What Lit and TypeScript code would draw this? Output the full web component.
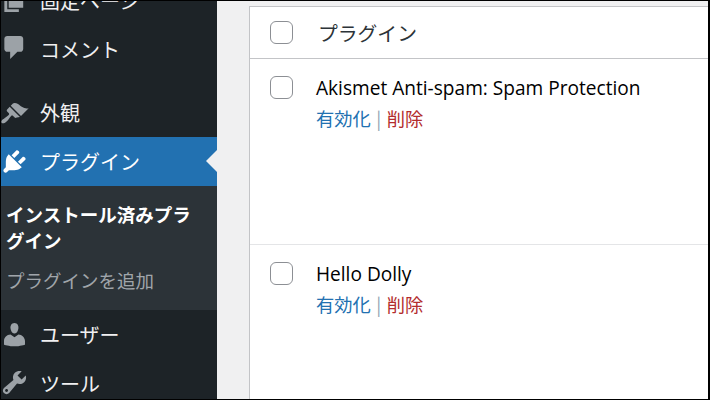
import { LitElement, html, css, svg } from "lit";
import { customElement } from "lit/decorators.js";

const ICONS: Record<string, string> = {
  page: "M6 15V2h10v13H6zm-1 1h8v2H3V5h2v11z",
  comments: "M5 2h9q.82 0 1.41.59T16 4v7q0 .82-.59 1.41T14 13h-2l-5 5v-5H5q-.82 0-1.41-.59T3 11V4q0-.82.59-1.41T5 2z",
  appearance: "M14.48 11.06L7.41 3.99l1.5-1.5c.5-.56 2.3-.47 3.51.32 1.21.8 1.43 1.28 2.91 2.1 1.18.64 2.45 1.26 4.45.85zm-.71.71L6.7 4.7 4.93 6.47c-.39.39-.39 1.02 0 1.41l1.06 1.06c.39.39.39 1.03 0 1.42-.6.6-1.43 1.11-2.21 1.69-.35.26-.7.53-1.01.84C1.43 13.23.4 14.98 1.2 15.8c.82.81 2.57-.22 3.91-1.56.31-.31.58-.66.85-1.02.57-.78 1.08-1.61 1.69-2.21.39-.39 1.02-.39 1.41 0l1.06 1.06c.39.39 1.02.39 1.41 0z",
  plugins: "M13.11 4.36L9.87 7.6 8 5.73l3.24-3.24c.35-.34 1.05-.2 1.56.32.52.51.66 1.21.31 1.55zm-8 1.77l.91-1.12 9.01 9.01-1.19.84c-.71.71-2.63 1.16-3.82 1.16H6.14L4.9 17.26c-.59.59-1.54.59-2.12 0-.59-.58-.59-1.53 0-2.12l1.24-1.24v-3.88c0-1.13.4-3.19 1.09-3.89zm7.26 3.97l3.24-3.24c.34-.35 1.04-.21 1.55.31.52.51.66 1.21.31 1.55l-3.24 3.25z",
  users: "M10 9.25c-2.27 0-2.73-3.44-2.73-3.44C7 4.02 7.82 2 9.97 2c2.16 0 2.98 2.02 2.71 3.81 0 0-.41 3.44-2.68 3.44zm0 2.57L12.72 10c2.39 0 4.52 2.33 4.52 4.53v2.49s-3.65 1.13-7.24 1.13c-3.65 0-7.24-1.13-7.24-1.13v-2.49c0-2.25 1.94-4.48 4.47-4.48z",
  tools: "M16.68 9.77c-1.34 1.34-3.3 1.67-4.95.99l-5.41 6.52c-.99.99-2.59.99-3.58 0s-.99-2.59 0-3.57l6.52-5.42c-.68-1.65-.35-3.61.99-4.95 1.28-1.28 3.12-1.62 4.72-1.06l-2.89 2.89 2.82 2.82 2.86-2.87c.53 1.58.18 3.39-1.08 4.65zM3.81 16.21c.4.39 1.04.39 1.43 0 .4-.4.4-1.04 0-1.43-.39-.4-1.03-.4-1.43 0-.39.39-.39 1.03 0 1.43z",
};

const icon = (name: string) => html`<svg class="icon i-${name}" viewBox="0 0 20 20" aria-hidden="true">${svg`<path d=${ICONS[name]}></path>`}</svg>`;

@customElement("app-root")
export class AppRoot extends LitElement {
  static styles = css`
    :host {
      display: flex;
      box-sizing: border-box;
      width: 710px;
      height: 400px;
      overflow: hidden;
      border: solid #000;
      border-width: 1px 2px 1px 1px;
      background: #f0f0f1;
      font-family: "Open Sans", "Noto Sans CJK JP", sans-serif;
    }
    .side {
      flex: 0 0 216px;
      height: 100%;
      overflow: hidden;
      background: #1d2327;
    }
    .menu {
      margin-top: -25px;
    }
    .item {
      position: relative;
      display: flex;
      align-items: center;
      height: 49px;
      color: #f0f0f1;
      font-family: "Noto Sans CJK JP", sans-serif;
      font-size: 20px;
    }
    .label {
      margin-top: -1px;
    }
    .icon {
      flex: 0 0 29px;
      width: 29px;
      height: 29px;
      margin: 0 11px 0 -1px;
      fill: #9ca2a7;
    }
    .i-comments {
      margin-bottom: 4px;
    }
    .i-appearance {
      margin-top: 4px;
    }
    .i-tools {
      margin-bottom: 2px;
    }
    .gap {
      height: 14px;
    }
    .item.current {
      background: #2271b1;
      color: #fff;
    }
    .item.current .icon {
      fill: #fff;
    }
    .item.current::after {
      content: "";
      position: absolute;
      right: 0;
      top: 13px;
      border: 11.5px solid transparent;
      border-left-width: 0;
      border-right: 11px solid #f0f0f1;
    }
    .sub {
      box-sizing: border-box;
      height: 124px;
      padding: 15px 20px 0 5px;
      background: #2c3338;
      font-family: "Noto Sans CJK JP", sans-serif;
      font-size: 18.5px;
      line-height: 26px;
    }
    .sub .on {
      color: #fff;
      font-weight: 700;
    }
    .sub .off {
      margin-top: 14px;
      color: #a0a5aa;
    }
    .main {
      flex: 1;
      min-width: 0;
      padding: 5px 0 0 32px;
    }
    .table {
      height: 100%;
      box-sizing: border-box;
      background: #fff;
      border: solid #c3c4c7;
      border-width: 1px 0 0 1px;
    }
    .row {
      display: flex;
      align-items: flex-start;
      padding-left: 20px;
    }
    .head {
      height: 51px;
      align-items: center;
      border-bottom: 1px solid #c3c4c7;
      color: #2c3338;
      font-family: "Noto Sans CJK JP", sans-serif;
      font-size: 19.8px;
    }
    .head .check {
      margin-right: 25px;
    }
    .plugin {
      height: 186px;
      box-sizing: border-box;
      border-bottom: 1px solid #e4e5e7;
      padding-top: 17px;
    }
    .plugin.last {
      border-bottom: 0;
      height: 150px;
    }
    .check {
      flex: 0 0 auto;
      box-sizing: border-box;
      width: 23px;
      height: 23px;
      border: 1.4px solid #8c8f94;
      border-radius: 6px;
      background: #fff;
      margin-right: 23px;
    }
    .name {
      color: #000;
      font-size: 19.1px;
      line-height: 26px;
      margin-top: -1px;
      white-space: nowrap;
    }
    .actions {
      display: flex;
      margin-top: 4px;
      font-family: "Noto Sans CJK JP", sans-serif;
      font-size: 18.3px;
      line-height: 26px;
      color: #8fa3b3;
      white-space: nowrap;
    }
    .sep {
      margin: 0 5.5px;
    }
    .act {
      color: #2271b1;
    }
    .del {
      color: #b32d2e;
    }
  `;

  private plugin(name: string, last = false) {
    return html`<div class="row plugin ${last ? "last" : ""}">
      <span class="check"></span>
      <div>
        <div class="name">${name}</div>
        <div class="actions"><span class="act">有効化</span><span class="sep">|</span><span class="del">削除</span></div>
      </div>
    </div>`;
  }

  render() {
    return html`
      <nav class="side">
        <div class="menu">
          <div class="item">${icon("page")}<span class="label">固定ページ</span></div>
          <div class="item">${icon("comments")}<span class="label">コメント</span></div>
          <div class="gap"></div>
          <div class="item">${icon("appearance")}<span class="label">外観</span></div>
          <div class="item current">${icon("plugins")}<span class="label">プラグイン</span></div>
          <div class="sub">
            <div class="on">インストール済みプラグイン</div>
            <div class="off">プラグインを追加</div>
          </div>
          <div class="item">${icon("users")}<span class="label">ユーザー</span></div>
          <div class="item">${icon("tools")}<span class="label">ツール</span></div>
        </div>
      </nav>
      <main class="main">
        <div class="table">
          <div class="row head"><span class="check"></span>プラグイン</div>
          ${this.plugin("Akismet Anti-spam: Spam Protection")}
          ${this.plugin("Hello Dolly", true)}
        </div>
      </main>
    `;
  }
}
